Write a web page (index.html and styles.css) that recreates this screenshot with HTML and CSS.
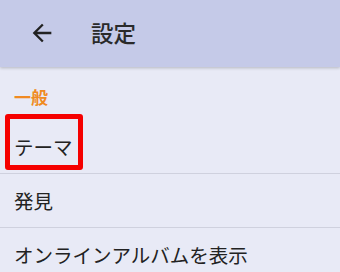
FILE: index.html
```html
<!DOCTYPE html>
<html lang="ja">
<head>
<meta charset="utf-8">
<link rel="stylesheet" href="styles.css">
</head>
<body>
<div class="app">
  <header class="toolbar">
    <span class="back">
      <svg viewBox="0 0 24 24" width="28" height="28"><path d="M20 11H7.83l5.59-5.59L12 4l-8 8 8 8 1.41-1.41L7.83 13H20v-2z" fill="#222"/></svg>
    </span>
    <h1 class="title">設定</h1>
  </header>
  <div class="section">一般</div>
  <div class="row highlighted"><span class="label">テーマ</span><div class="mark"></div></div>
  <div class="row"><span class="label">発見</span></div>
  <div class="row"><span class="label">オンラインアルバムを表示</span></div>
</div>
</body>
</html>
```
FILE: styles.css
```css
html, body {
  margin: 0;
  padding: 0;
}
body {
  width: 340px;
  height: 272px;
  overflow: hidden;
  background: #e8eaf6;
  font-family: "Noto Sans CJK JP", "Noto Sans", sans-serif;
}
.app {
  display: flex;
  flex-direction: column;
}
.toolbar {
  height: 67px;
  background: #c5cae8;
  box-shadow: 0 1px 3px rgba(0,0,0,0.22);
  display: flex;
  align-items: center;
  position: relative;
  z-index: 1;
}
.back {
  display: flex;
  margin-left: 28px;
  width: 28px;
  height: 28px;
  margin-top: -2px;
}
.title {
  margin: 0 0 0 35px;
  font-size: 22.5px;
  font-weight: 500;
  color: #2a2a2a;
  line-height: 28px;
  margin-top: -3px;
}
.section {
  padding: 18px 14px 11px;
  line-height: 24px;
  font-size: 17px;
  font-weight: 700;
  color: #f08a22;
}
.row {
  height: 53px;
  border-bottom: 1px solid #cfd1de;
  display: flex;
  align-items: center;
  padding-left: 14px;
  position: relative;
  font-size: 19.5px;
  color: #222;
}
.label {
  line-height: 26px;
}
.mark {
  position: absolute;
  left: 5px;
  top: -6px;
  width: 68px;
  height: 46px;
  border: 5px solid #f50000;
  border-radius: 3px;
}
```
